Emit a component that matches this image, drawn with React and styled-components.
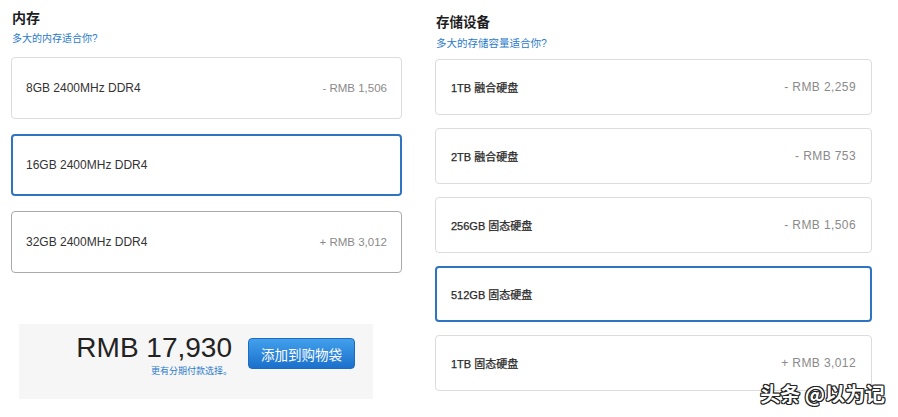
import React from 'react';
import styled, { createGlobalStyle } from 'styled-components';

const GlobalStyle = createGlobalStyle`
  html, body {
    margin: 0;
    padding: 0;
    background: #fff;
  }
  body {
    font-family: "Liberation Sans", "Noto Sans CJK SC", sans-serif;
    color: #333;
  }
`;

const Page = styled.div`
  position: relative;
  width: 898px;
  height: 417px;
  overflow: hidden;
  display: flex;
  align-items: flex-start;
  gap: 33px;
  padding-left: 11px;
  box-sizing: border-box;
`;

const Column = styled.div`
  display: flex;
  flex-direction: column;
  width: ${(p) => p.width}px;
  padding-top: ${(p) => p.top}px;
`;

const Title = styled.div`
  font-size: ${(p) => p.size}px;
  line-height: 20px;
  font-weight: 700;
  color: #1d1d1f;
  padding-left: 1px;
`;

const HelpLink = styled.a`
  font-size: ${(p) => p.size}px;
  line-height: 17px;
  color: #2a7acb;
  text-decoration: none;
  padding-left: 1px;
  margin-top: 2px;
`;

const Options = styled.div`
  display: flex;
  flex-direction: column;
  gap: ${(p) => p.gap}px;
  margin-top: ${(p) => p.top}px;
`;

const Option = styled.div`
  box-sizing: border-box;
  height: ${(p) => p.h}px;
  display: flex;
  align-items: center;
  justify-content: space-between;
  padding: 0 ${(p) => p.pr}px 0 ${(p) => (p.selected ? p.pl - 1 : p.pl)}px;
  border-radius: 4px;
  border: ${(p) =>
    p.selected ? '2px solid #2f74c0' : p.hover ? '1px solid #a9a9a9' : '1px solid #dcdcdc'};
  background: #fff;
`;

const Label = styled.span`
  font-size: ${(p) => p.size}px;
  color: ${(p) => p.color || '#333'};
  -webkit-text-stroke: ${(p) => p.stroke || 0}px ${(p) => p.color || '#333'};
`;

const Delta = styled.span`
  font-size: ${(p) => p.size}px;
  letter-spacing: ${(p) => p.ls || 0}px;
  color: #8a8a8a;
`;

const Summary = styled.div`
  margin: 51px 0 0 8px;
  width: 354px;
  height: 75px;
  box-sizing: border-box;
  background: #f6f6f6;
  display: flex;
  justify-content: flex-end;
  align-items: flex-start;
  gap: 16px;
  padding: 10px 18px 0 0;
`;

const PriceBlock = styled.div`
  display: flex;
  flex-direction: column;
  align-items: flex-end;
`;

const Total = styled.div`
  font-size: 28px;
  line-height: 28px;
  color: #222;
`;

const Installment = styled.a`
  margin-top: 3px;
  font-size: 9px;
  line-height: 12px;
  color: #2a7acb;
  text-decoration: none;
`;

const AddButton = styled.button`
  margin-top: 4px;
  width: 107px;
  height: 31px;
  border: 1px solid #1c6cc2;
  border-radius: 4px;
  background: linear-gradient(#42a0ec, #1b70cb);
  color: #fff;
  font-family: "Noto Sans CJK SC", sans-serif;
  font-size: 13.5px;
  padding: 0;
`;

const Watermark = styled.div`
  position: absolute;
  right: 13px;
  bottom: 11px;
  font-family: "Noto Sans CJK SC", sans-serif;
  font-size: 20px;
  font-weight: 700;
  line-height: 24px;
  color: #fff;
  text-shadow: 1px 0 #222, -1px 0 #222, 0 1px #222, 0 -1px #222,
    1px 1px #222, -1px -1px #222, 1px -1px #222, -1px 1px #222;
`;

const memory = [
  { name: '8GB 2400MHz DDR4', delta: '- RMB 1,506' },
  { name: '16GB 2400MHz DDR4', selected: true },
  { name: '32GB 2400MHz DDR4', delta: '+ RMB 3,012', hover: true },
];

const storage = [
  { name: '1TB 融合硬盘', delta: '- RMB 2,259' },
  { name: '2TB 融合硬盘', delta: '- RMB 753' },
  { name: '256GB 固态硬盘', delta: '- RMB 1,506' },
  { name: '512GB 固态硬盘', selected: true },
  { name: '1TB 固态硬盘', delta: '+ RMB 3,012' },
];

export default function App() {
  return (
    <>
      <GlobalStyle />
      <Page>
        <Column width={391} top={8}>
          <Title size={14}>内存</Title>
          <HelpLink size={10}>多大的内存适合你?</HelpLink>
          <Options gap={15} top={10}>
            {memory.map((m) => (
              <Option key={m.name} h={62} pl={14} pr={14} selected={m.selected} hover={m.hover}>
                <Label size={12}>{m.name}</Label>
                {m.delta && <Delta size={11.5}>{m.delta}</Delta>}
              </Option>
            ))}
          </Options>
          <Summary>
            <PriceBlock>
              <Total>RMB 17,930</Total>
              <Installment>更有分期付款选择。</Installment>
            </PriceBlock>
            <AddButton>添加到购物袋</AddButton>
          </Summary>
        </Column>
        <Column width={437} top={13}>
          <Title size={13.5}>存储设备</Title>
          <HelpLink size={10.5}>多大的存储容量适合你?</HelpLink>
          <Options gap={13} top={7}>
            {storage.map((s) => (
              <Option key={s.name} h={56} pl={15} pr={15} selected={s.selected}>
                <Label size={11} color="#2a2a2a" stroke={0.25}>{s.name}</Label>
                {s.delta && <Delta size={12} ls={0.4}>{s.delta}</Delta>}
              </Option>
            ))}
          </Options>
        </Column>
        <Watermark>头条 @以为记</Watermark>
      </Page>
    </>
  );
}
